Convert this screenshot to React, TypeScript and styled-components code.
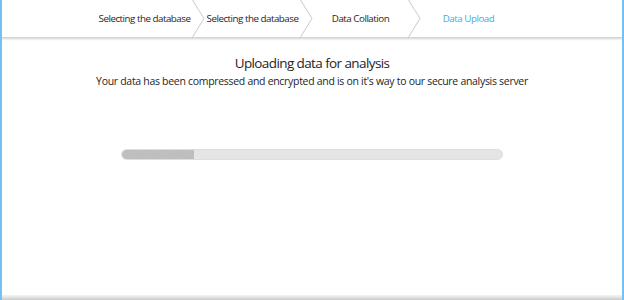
import React from "react";
import styled, { createGlobalStyle } from "styled-components";

const GlobalStyle = createGlobalStyle`
  html, body {
    margin: 0;
    padding: 0;
    background: #ffffff;
  }
  body {
    font-family: "Open Sans", "Noto Sans", Arial, sans-serif;
  }
`;

const Frame = styled.div`
  width: 624px;
  height: 300px;
  box-sizing: border-box;
  border-left: 2px solid #74c0ee;
  border-right: 2px solid #74c0ee;
  display: flex;
  flex-direction: column;
  background: #fff;
  overflow: hidden;
`;

const Steps = styled.nav`
  height: 37px;
  flex-shrink: 0;
  display: flex;
  align-items: stretch;
  padding-left: 95px;
  border-bottom: 1px solid #d6d6d6;
  box-shadow: 0 1px 2px rgba(0, 0, 0, 0.18);
  position: relative;
  z-index: 1;
`;

const Step = styled.div<{ $active?: boolean }>`
  width: 95px;
  display: flex;
  align-items: center;
  justify-content: center;
  font-size: 9.8px;
  letter-spacing: -0.5px;
  white-space: nowrap;
  color: ${(p) => (p.$active ? "#4ea8e0" : "#262626")};
`;

const Chevron = styled.svg`
  width: 13px;
  height: 37px;
  flex-shrink: 0;
  display: block;
`;

const Body = styled.main`
  flex: 1;
  display: flex;
  flex-direction: column;
  align-items: center;
  padding-top: 16px;
`;

const Title = styled.h1`
  margin: 0;
  font-size: 13.5px;
  letter-spacing: -0.6px;
  font-weight: 400;
  line-height: 19px;
  color: #1e1e1e;
`;

const Subtitle = styled.p`
  margin: 0;
  font-size: 10.5px;
  letter-spacing: -0.3px;
  line-height: 16px;
  color: #1e1e1e;
`;

const Track = styled.div`
  margin-top: 60px;
  width: 382px;
  height: 11px;
  box-sizing: border-box;
  border-radius: 6px;
  background: #e5e5e5;
  border: 1px solid #dedede;
  overflow: hidden;
  align-self: flex-start;
  margin-left: 119px;
`;

const Fill = styled.div`
  height: 100%;
  border-radius: 6px 0 0 6px;
  background-color: #bdbdbd;
  background-image: repeating-linear-gradient(
    135deg,
    rgba(255, 255, 255, 0.06) 0 1px,
    transparent 1px 3px
  );
`;

const Footer = styled.div`
  height: 5px;
  flex-shrink: 0;
  background: linear-gradient(#f4f4f4, #e6e6e6 40%, #c9c9c9);
`;

const steps = [
  "Selecting the database",
  "Selecting the database",
  "Data Collation",
  "Data Upload",
];

const StepChevron = () => (
  <Chevron viewBox="0 0 13 37">
    <polyline
      points="0.5,0 12,18.5 0.5,37"
      fill="none"
      stroke="#c9c9c9"
      strokeWidth="1"
    />
  </Chevron>
);

export default function App() {
  const progress = 19;
  return (
    <>
      <GlobalStyle />
      <Frame>
        <Steps>
          {steps.map((label, i) => (
            <React.Fragment key={i}>
              <Step $active={i === steps.length - 1}>{label}</Step>
              {i < steps.length - 1 && <StepChevron />}
            </React.Fragment>
          ))}
        </Steps>
        <Body>
          <Title>Uploading data for analysis</Title>
          <Subtitle>
            Your data has been compressed and encrypted and is on it's way to our
            secure analysis server
          </Subtitle>
          <Track>
            <Fill style={{ width: `${progress}%` }} />
          </Track>
        </Body>
        <Footer />
      </Frame>
    </>
  );
}
